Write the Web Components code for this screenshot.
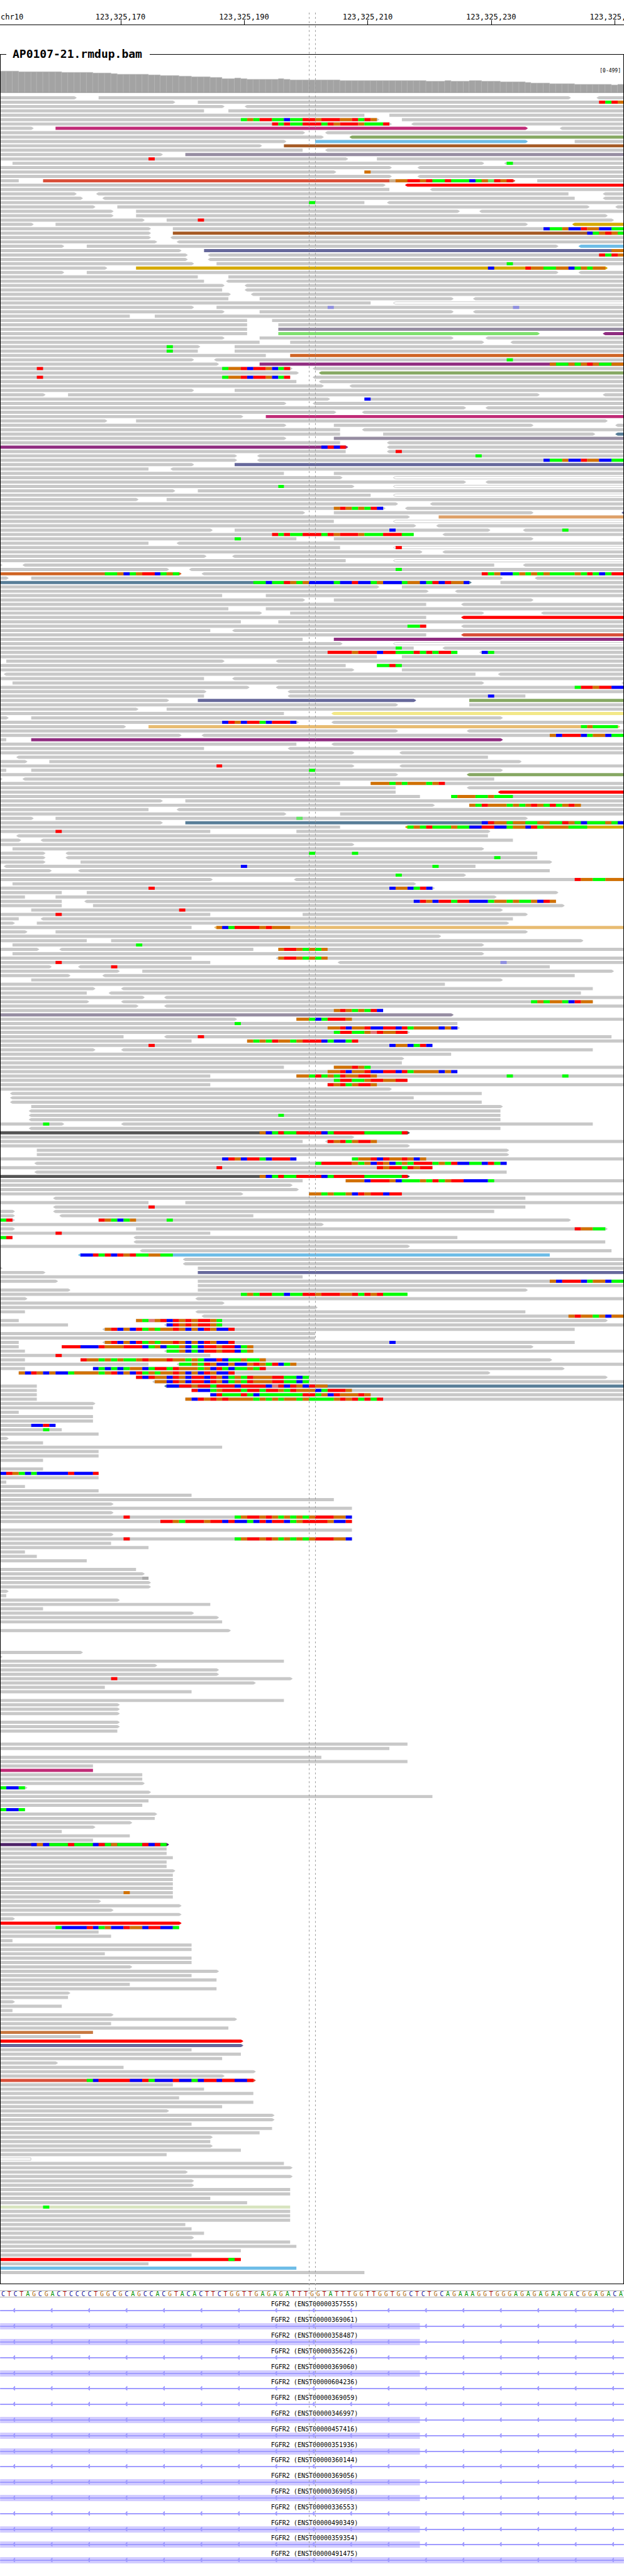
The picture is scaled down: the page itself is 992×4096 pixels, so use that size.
<!DOCTYPE html>
<html lang="en">
<head>
<meta charset="utf-8">
<title>AP0107-21.rmdup.bam</title>
<style>
  body { margin: 0; background: #fff; color: #000; font-family: "DejaVu Sans Mono", monospace; }
</style>
</head>
<body>
<genome-viewer>
  <genome-ruler chromosome="chr10" start="123325151" bases="101"></genome-ruler>
  <alignment-track range="[0-499]">AP0107-21.rmdup.bam</alignment-track>
  <reference-sequence>CTCTAGCGACTCCCCTGGCGCAGCCACGTACACTTCTGGTTGAGAGATTTGGTATTTGGTTGGTGGCTCTGCAGAAAGGTGGGAGAGAGAAGACGGAGACA</reference-sequence>
  <transcript-list>
    <gene-transcript>FGFR2 (ENST00000357555)</gene-transcript>
    <gene-transcript exon="68">FGFR2 (ENST00000369061)</gene-transcript>
    <gene-transcript exon="68">FGFR2 (ENST00000358487)</gene-transcript>
    <gene-transcript>FGFR2 (ENST00000356226)</gene-transcript>
    <gene-transcript exon="68">FGFR2 (ENST00000369060)</gene-transcript>
    <gene-transcript>FGFR2 (ENST00000604236)</gene-transcript>
    <gene-transcript>FGFR2 (ENST00000369059)</gene-transcript>
    <gene-transcript exon="68">FGFR2 (ENST00000346997)</gene-transcript>
    <gene-transcript exon="68">FGFR2 (ENST00000457416)</gene-transcript>
    <gene-transcript exon="68">FGFR2 (ENST00000351936)</gene-transcript>
    <gene-transcript>FGFR2 (ENST00000360144)</gene-transcript>
    <gene-transcript exon="68">FGFR2 (ENST00000369056)</gene-transcript>
    <gene-transcript exon="68">FGFR2 (ENST00000369058)</gene-transcript>
    <gene-transcript>FGFR2 (ENST00000336553)</gene-transcript>
    <gene-transcript exon="68">FGFR2 (ENST00000490349)</gene-transcript>
    <gene-transcript exon="68">FGFR2 (ENST00000359354)</gene-transcript>
    <gene-transcript exon="101">FGFR2 (ENST00000491475)</gene-transcript>
  </transcript-list>
</genome-viewer>

<script>
const BASES = 101;
const edge = n => Math.round(n * 1000 / BASES);

/* Packed alignments, one line per row of the track. "a-b" is a read from base
   a to base b, "<" and ">" mark the strand arrow, a trailing letter its colour;
   "n:ACGT" lists the mismatches from base n (lower case: low quality). */
const READS = `0-12> 16-92> <97-101
0-28> 32-101 97:TATG
0-36> <40-101
0-33 37-101
0-59 63-101
0-61> 65-101 39:AGATTAACAATTGTTTGGTATG
0-63> <67-101 44:TATAATTTATGTTTGAAAT
0-5> 9-85>m <91-101
0-49> <53-101
0-52> <57-101e
0-46> 51-85>l 93-101
0-42> 46-101n
0-49 <53-101
0-26> 30-101p
0-56> 61-101 24:T
2-78> <82-101 82:A
0-63> <68-101
0-54> 59-101 59:G
0-63> <68-101
0-3 7-83>k 87-101 63:gGGTTGTAATAAACAGaTGT
0-62> <66-101r
0-63 <70-101
0-12> <16-92 <98-101
0-13> <17-93 <98-101
0-59 <63-101 50:A
0-15> 19-95> <100-101
0-18> 22-74> <78-101
0-18> 22-98>
0-23> 27-99> 32:T
0-5> 9-85> <93-101d
0-24> 28-101 88:CAAGCCTGGCCAA
0-24> 28-101n 95:CAGTGA
0-24> <28-101
0-25> <29-101
0-10> 14-90> <94-101l
0-29> 33-101s 99:GG
0-30> <34-101 97:TATG
0-30> <34-101
0-31> 35-101 82:A
0-17> 22-98>d 79:C 85:TGGAAGGCAGAGG
0-10> 14-90> <94-101
0-32 37-101
0-33 <37-101
0-36> <40-101
0-36 <40-101
0-37> <41-101
0-37 42-73> <77-101
0-60 <64-101w
0-31> 35-101 53:c 83:c
0-36> 42-73> <77-101
0-21 25-101
0-40 44-101
0-40 45-101
0-40 45-101p
0-40 45-87>v <98-101u
0-36> 42-73> <79-101
0-42 47-78> <83-101
0-32> 38-101 27:A
0-32 38-101 27:A
0-43 47-101o
0-31> <35-101 82:A
0-35> 42-101u 89:GAAGAGTGAAGG
0-47> <51-101 6:T 36:AGGTCTTGCAT
0-48> <52-101e
0-47 <51-101 6:T 36:AGGTCTTGCAT
0-48 <52-101
0-52> <57-101
0-31> 38-101
0-7> 11-87> <98-101
0-53> 59-101 59:C
0-46> <51-101
0-75> <79-101
0-54> <59-101
0-39> 43-101m
0-17> 22-98>
0-46> 54-86> <100-101
0-55 <59-101
0-55 62-96> <100-101t
0-46> 54-101p
0-55 <63-101
0-56>u <63-101 52:CTCT
0-56 <63-101 64:T
0-38> <42-101 77:A
0-38> <42-101 88:CAAGCCTGGCCAA
0-31> 38-101s
0-24 <28-101
0-46 54-101
0-55> <64-101w
0-75> <79-101
0-57> <64-101w 45:A
0-28> 32-101
0-60 <64-101w
0-22> 27-101
0-64> <70-101
0-62> <66-101 54:GTGAGATC
0-49> 54-86> <101-101s
0-66> 71-101a
0-54 <64-101w
0-67> <71-101
0-34> 38-79> <85-101 63:C 91:A
0-67 <72-101 44:TATAATTTATGTTTGAAATTTAA
0-48 54-86> <101-101 38:A
0-24 <29-101
0-55 <64-101w 64:T
0-68> <72-101
0-33> <38-101
0-56 <64-101w
0-0> <4-80 <85-101
0-27> <31-101 64:A
0-29>o <33-101 17:AAGCAGTTCAGA 78:TAGCCAGAGAGAAAAGATACATT
0-1> 5-81> <87-101
0-76>t 81-101 41:AACAATGAGCCCCACCTCCAGCCCAGGCATCTGGC
0-61> 65-101
0-69> <74-101
0-36 43-101
0-49> 54-86> <101-101
0-69 <75-101
0-37 43-101
0-42> 47-78> <88-101
0-69 <75-101r
0-39 45-101
0-69 <75-101 66:AAT
0-34 <38-101
0-69 <75-101k
0-49 54-101u
0-55> <64-101w
0-67 <72-101 64:A
0-74 <78-101 53:TTTTGTTTCTTAAATATATTA 78:CA
0-61 65-101
1-36> <45-101
0-56 61-101 61:AATA
0-57> 65-101
<1-77 <81-101
0-33 <38-101
2-78> <101-101
0-40> <45-101 93:ATTGTTCC
0-33> <47-101
0-33 <47-85 79:C
0-27> 32-67>s 76-101e
0-64> 76-101
0-22> 27-101
0-46 <54-101y
0-1> 5-81>
0-48> <54-101 36:CTGCTTACTTTC
0-20> 24-100>h 94:AGAAAA
0-64> <76-101
0-29> <33-101 89:GCTTTCAGGCAA
0-1 5-81>u
0-48 <54-101
0-33 <47-101
0-57> <65-101
<3-79
0-4> 8-84>
0-57> <65-101 35:T
0-1 5-81> 50:A
0-64> <76-101e
0-0> <4-80
0-55 60-101 60:GGGAGAGGGAGT
0-64 <76-101
0-64 <81-101r
0-68 73-101 73:AGGGAAGAAA
0-26> 30-101
0-70> 76-101 76:GATGGGAGAGTGATAGTG
0-24 <29-101
0-46> 55-101
0-5> 9-85> 48:a
0-26> 30-101t 78:CTGGAGGAAGGAATGACAAAGAC
0-55 <66-101d 66:AGATAAAGAACCTTCCAGGCTAGGGGAAA
0-34 48-79> 9:T
<3-79
0-3> <7-83
0-57>
2-78>
0-7> <11-87 50:A 57:A
0-7> <11-87 80:A
0-7> 13-89>
<1-77 39:C 70:A
0-8> <13-89
0-75> 64:A
0-34> <48-101 93:TGGAAGGG
2-67>
0-70> 24:T 63:CGGCATC
0-10 14-90>
0-4 9-80>
0-10 <14-90 67:CTGCTTATTCCCAGGAGAAGCTG
0-10 15-91>
5-81> 29:T
0-34 49-85> 9:T
0-3 <7-83
0-2> 6-82>
0-31 <35-101h 35:GCATTTTGTGGG
0-4> 9-85>
0-71>
0-14 18-94>
2-78> 22:A
0-6> <10-41 45-101 45:GTTGAGAG
2-78>
0-31 <45-101 45:GTTGAGAG
0-34 <55-101 9:T 81:c
0-8> <13-89 18:T
0-19> 23-99>
0-11> <17-93
5-81>
0-72
0-15> <20-96
0-14 <18-94
0-23> <27-101
0-14> <20-96 86:AGAGGACTGG
0-22> <27-101
0-62 54:GTGAGATC
0-73>p
0-38> 48-101 48:GGACATTTG
0-74 38:A
0-74> 53:GGTCGGTCCTTCTAGGGGCGC
0-66> 54:ATTAAGtTGGTT
0-20 <27-99 32:T
0-31 40-101 40:GAGATGGAGTTTCACCAT
0-70 24:T 63:CGGCATC
0-15> <20-96
0-73
0-65>
0-65
0-46 54-101 54:GGGTGA
0-74 53:GGTCGGTCCTTCTAGGGGCGC
0-34 48-101 48:GGATAGATGGTTG 82:A 91:A
0-66 54:ATTAAGTTGGTT
0-34 53-101 53:TGTAGTTG
0-63>
<2-78
<2-67
<2-78
5-81>
<5-81
<5-81 45:A
<5-81
0-10> <20-96 7:A
<5-81
0-66>x 42:GCATAATTTTCATTTTTAAAAAAT
0-57>
0-49 <53-101 53:TGTAGTTG
0-66>
6-82>
6-82>
0-48 57-101 36:CTGCTTACTTTC 57:AGGTCTGGTGCG
<6-82 51:ATTTTTGAGCTGCAGATTTAGATCCAACTAC
0-70 35:T 61:TGTTATGTT
<6-82
0-66>x 42:GCATAATTTTCATTTTTAAAAAAT
0-49 56-101 56:GGGCTTTGCAAAGATAGTTCCCCA
0-47>
0-48>
0-39> 50-101 50:GGAGAAGCTGTTCTT
<9-85
0-24 30-101
<9-85 24:T
0-2> <9-80
0-2> <10-41
0-2> 16-92> 0:AT 16:TGACAG 27:A
0-52>
0-2> 22-98> 93:TGGAA
0-34 9:T
0-2 <22-74 0:AT
<22-98
0-66>
<23-99
<13-89l 13:CCTATCTGTAAGGAA
<30-101
<30-101
0-0> 32-101
0-7> 32-101s
0-49
0-9> 32-101 89:GCTTTCAGGCAA
32-101
0-11> 32-85>
0-66 39:AGATTAACAATTGTTTGGTATGTAAAA
0-4> <32-101
0-36>
0-51>
0-4 <32-85
<33-101 92:GTGGAGCGG
0-3 22-98> 22:GAtGTCTGTGTTGA
0-11 <27-101 27:CTGTGTTGA
<17-93 17:GTCGCTAGAGGTGCGCTGCCT
0-51
0-51
0-3 <17-93 17:GTCGCTAGAGGTGCGCTGCCT 63:C
0-3 10-86> 10:TTTCCCTGGGTTTCAGCAAGCACTTGTTCAG
0-4 <27-101 27:AAGCACTTGTTCAG
0-34 9:T
0-4 13-89> 13:TGGAGAGAAGTGGGTGGAGACCTCAAGAAG
0-24 <29-101 29:AAGATGCCGCCGTGATCAG
0-4 15-91> 15:CACACAGGCATTATGGGAGCTACAAGAT
3-79> 3:GCTGCGCCAGGGGAGTCGCTAGAGGTGCGCTGCCT
22-98> 22:TCTGGCTGCTTCTGCAGATGGGTTAACA
<25-101 25:GGCTGCTTCTGCAGATGGGTTAACA
0-6 <27-101t 27:CCTTGTTATTTCTTTTCtTCTGCTGG
0-6 31-101 31:TCCAGTTTATTATTGATGGGCATTTG
0-6 34-101 34:CTAAATACAAAAAAATTAGCTGGGTG
0-6 30-101 30:GCTGTGTGGGGAGAGAGGAGAAAAGTGTATAT
0-15>
0-15
0-3
0-15
0-15
0-9 5:CCTC
0-10 7:A
0-16
0-1>
0-7
0-36
0-16
0-16
0-7

0-7
0-16 0:CTGACACCCCCTCCCT
0-16
0-1
0-4
0-16
0-31
0-54
0-18>
0-57
0-18>
0-57 20:T 38:AGTTGTGAGAGAGTTTGGC
0-57 26:TTGATTTGTTCTCCACTCTTCAGTTTTGCCT

0-57
0-18>
0-57 20:T 38:AGTTGTGAGAGAGTTTGGC
0-18
0-24
0-4
0-6
0-14

0-22
0-23>
0-24 23:n
0-24>
0-24>
0-1>
0-1
0-19>
0-34
0-7
0-31>
0-35>
0-36

0-37>




0-13>
0-0>
0-46
0-25>
0-35>
0-35>
0-47> 18:T
0-41>
0-17
0-31

0-46
0-19>
0-19>
0-19>

0-19>
0-19>
0-19


0-66
0-63

0-52
0-66
0-15
0-15m
0-23
0-23
0-23>
0-4> 0:ACCA
0-24>
0-70
0-24
0-23
0-4 0:ACCA
0-25>
0-25
0-21>
0-15>
0-10
0-21
0-15
0-27>z 5:CGCAAATAAACTAGAAAATCTA
0-27
0-27
0-28
0-27
0-27
0-28>
0-28
0-28
0-28
0-28
0-28 20:G
0-28
0-16>
0-29>
0-18>
0-29>
0-2>
0-29>r
0-29 9:ACCCCTCAGCCTGGCTTCCA
0-16
0-18
0-2
0-31
0-31
0-17
0-31
0-31
0-21>
0-35>
0-31
0-35
0-21
0-35
0-11>
0-11
0-2>
0-10
0-2
0-18>
0-38>
0-18
0-37
0-15q
0-13
0-39>r
0-39>s
0-31
0-39
0-36
0-9>
0-20
0-41>
0-36>
0-41>k 14:ACTTTTTCCTACCCTCCACTTCTTCCT
0-28
0-33
0-41
0-29
0-41
0-36
0-27>
0-44>
0-44>
0-31
0-44
0-42
0-34>
0-34
0-34>
0-39
0-27
0-5w
0-46
0-47>
0-30>
0-47>
0-31>
0-31>
0-47
0-47
0-34
0-40
0-47j 7:A
0-47
0-47
0-47
0-30
0-31
0-33
0-31>
0-47
0-48
0-39
0-31
0-39r 37:A
0-24
0-48l
0-59`.split('\n');

const READ_COLOURS = {
  '': '#c8c8c8', m: '#c02b77', e: '#86a863', l: '#6fbde7', n: '#a55a24', p: '#968da2',
  k: '#d9503a', r: '#ff0000', d: '#d5a900', s: '#66689b', v: '#80e070', u: '#8f2d80',
  o: '#cf6424', t: '#587e98', a: '#dda068', y: '#f3e888', h: '#e8bc72', x: '#545454',
  z: '#4e2468', q: '#c87840', j: '#d8e4c0'
};
const BASE_COLOURS = {
  A: '#00ff00', C: '#0000ff', G: '#d17105', T: '#ff0000',
  a: '#64e664', c: '#8f8fdf', g: '#c9ae8c', t: '#e07878', n: '#aaaaaa'
};

/* Depth of coverage as runs of [bases, height]. */
const COVERAGE = [[3,34],[7,33],[5,32],[3,31],[1,30],[5,29],[2,28],[3,27],[2,26],[3,25],[2,24],
  [2,22],[1,23],[1,22],[5,21],[1,22],[1,21],[8,20],[14,19],[3,18],[1,19],[3,18],[2,19],[3,18],
  [4,17],[1,16],[3,15],[4,14],[6,13],[1,12],[1,13]];

function attach(host, html) {
  const template = document.createElement('template');
  template.innerHTML = html;
  host.attachShadow({ mode: 'open' }).append(template.content.cloneNode(true));
}

class GenomeViewer extends HTMLElement {
  constructor() {
    super();
    attach(this, `
      <style>
        :host { display: block; position: relative; overflow: hidden; padding-bottom: 14px; }
        .guides { position: absolute; top: 20px; left: 0; width: 100%; pointer-events: none; }
      </style>
      <slot></slot>
      <svg class="guides" viewBox="0 0 1000 4084" aria-hidden="true">
        <path d="M495.5 0V4084M505.5 0V4084" stroke="#999" stroke-dasharray="3 4" fill="none"/>
      </svg>`);
  }
}

class GenomeRuler extends HTMLElement {
  connectedCallback() {
    const start = Number(this.getAttribute('start'));
    const bases = Number(this.getAttribute('bases'));
    let labels = '';
    for (let i = 0; i < bases; i++) {
      const position = start + i;
      if (position % 20 === 10) {
        labels += `<span class="mark" style="grid-column:${i + 1}">${position.toLocaleString('en-US')}</span>`;
      }
    }
    attach(this, `
      <style>
        :host { display: block; padding-top: 20px; overflow: hidden; border-bottom: 1px solid #000; }
        .scale { display: grid; grid-template-columns: repeat(${bases}, minmax(0, 1fr));
                 height: 19px; font-size: 12px; line-height: 14px; white-space: nowrap; }
        .name { grid-area: 1 / 1 / 2 / span 8; padding-left: 1px; }
        .mark { position: relative; grid-row: 1; justify-self: center; }
        .mark::after { content: ""; position: absolute; left: 50%; top: 12px; width: 1px; height: 7px; background: #000; }
      </style>
      <div class="scale"><span class="name">${this.getAttribute('chromosome')}</span>${labels}</div>`);
  }
}

class AlignmentTrack extends HTMLElement {
  connectedCallback() {
    attach(this, `
      <style>
        :host { display: block; margin-top: 36px; }
        fieldset { margin: 0; padding: 0; border: 1px solid #000; min-width: 0; }
        legend { margin-left: 9px; padding: 0 12px 0 10px; font-size: 18px; font-weight: bold; line-height: 20px; }
        .coverage { position: relative; margin-bottom: 5px; }
        .range { position: absolute; top: 12px; right: 4px; font-size: 8px; line-height: 10px; }
        svg { display: block; width: 100%; }
      </style>
      <fieldset>
        <legend><slot></slot></legend>
        <div class="coverage">
          <svg viewBox="1 0 998 52">${this.coverage()}</svg>
          <span class="range">${this.getAttribute('range')}</span>
        </div>
        <svg viewBox="1 0 998 3507">${READS.map((row, i) => this.row(row, i * 7)).join('')}</svg>
      </fieldset>`);
  }

  coverage() {
    const floor = 51;
    let base = 0, bars = '', cores = '';
    for (const [count, height] of COVERAGE) {
      for (let i = 0; i < count; i++, base++) {
        const x = edge(base), width = edge(base + 1) - x;
        bars += `M${x} ${floor - height}h${width}v${height}h${-width}z`;
        cores += `M${x} ${floor - height + 1}h${width - 1}v${height - 1}h${1 - width}z`;
      }
    }
    return `<path fill="#b4b4b4" d="${bars}"/><path fill="#a3a3a3" d="${cores}"/>
      <path fill="#777" d="M0 ${floor}h1000v1H0z"/>`;
  }

  row(text, y) {
    return text.split(' ').filter(Boolean)
      .map(item => item.includes(':') ? this.mismatches(item, y) : this.read(item, y)).join('');
  }

  read(item, y) {
    const [, left, from, to, right, code] = item.match(/^(<?)(\d+)-(\d+)(>?)(\w?)$/);
    const hollow = code === 'w', inset = hollow ? 0.5 : 0;
    const a = edge(+from) + inset, b = edge(+to) - inset, top = y + inset, bottom = y + 5 - inset;
    const path = `M${a} ${top}H${b}` +
      (right ? `L${b + 2} ${y + 1}L${b + 4} ${y + 2.5}L${b + 2} ${y + 4}L${b} ${bottom}` : `V${bottom}`) +
      `H${a}` + (left ? `L${a - 2} ${y + 4}L${a - 4} ${y + 2.5}L${a - 2} ${y + 1}` : '') + 'z';
    return hollow
      ? `<path fill="#fff" stroke="${READ_COLOURS['']}" d="${path}"/>`
      : `<path fill="${READ_COLOURS[code]}" d="${path}"/>`;
  }

  mismatches(item, y) {
    const [start, letters] = item.split(':');
    let base = +start;
    return letters.match(/(.)\1*/g).map(run => {
      const x = edge(base);
      base += run.length;
      return `<path fill="${BASE_COLOURS[run[0]]}" d="M${x} ${y}H${edge(base)}v5H${x}z"/>`;
    }).join('');
  }
}

class ReferenceSequence extends HTMLElement {
  connectedCallback() {
    const letters = [...this.textContent.trim()];
    attach(this, `
      <style>
        :host { display: grid; grid-template-columns: repeat(${letters.length}, minmax(0, 1fr)); margin-top: 10px;
                border: solid #aaa; border-width: 1px 0; font-size: 10px; line-height: 9px; text-align: center; }
        .A { color: #009600; } .C { color: #1414a0; } .G { color: #b46e14; } .T { color: #b41414; }
      </style>
      ${letters.map(letter => `<span class="${letter}">${letter}</span>`).join('')}`);
  }
}

class TranscriptList extends HTMLElement {
  constructor() {
    super();
    attach(this, `
      <style>
        :host { display: grid; grid-auto-rows: minmax(0, 1fr); aspect-ratio: 40 / 17; margin-top: 6px; }
      </style>
      <slot></slot>`);
  }
}

class GeneTranscript extends HTMLElement {
  connectedCallback() {
    const exon = edge(Number(this.getAttribute('exon') || 0));
    let arrows = '';
    for (let x = 20; x < 1000; x += 60) arrows += `M${x} 5L${x + 3} 1H${x + 4}V8H${x + 3}z`;
    attach(this, `
      <style>
        :host { display: block; font-size: 10px; line-height: 10px; text-align: center; }
        .name { padding-left: 8px; }
        svg { display: block; width: 100%; }
      </style>
      <div class="name"><slot></slot></div>
      <svg viewBox="0 0 1000 15" aria-hidden="true">
        <path fill="#d2ccff" d="M0 0H${exon}V10H0z"/>
        <path fill="#a09cff" d="M0 4H1000V6H0z${arrows}"/>
      </svg>`);
  }
}

customElements.define('genome-viewer', GenomeViewer);
customElements.define('genome-ruler', GenomeRuler);
customElements.define('alignment-track', AlignmentTrack);
customElements.define('reference-sequence', ReferenceSequence);
customElements.define('transcript-list', TranscriptList);
customElements.define('gene-transcript', GeneTranscript);
</script>
</body>
</html>
